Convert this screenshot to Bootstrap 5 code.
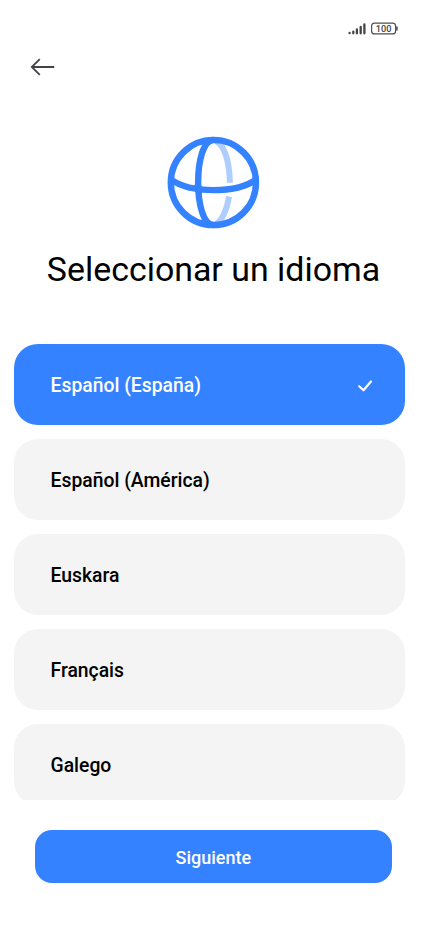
<!DOCTYPE html>
<html lang="es">
<head>
<meta charset="utf-8">
<meta name="viewport" content="width=device-width, initial-scale=1">
<title>Seleccionar un idioma</title>
<link href="https://cdn.jsdelivr.net/npm/bootstrap@5.3.0/dist/css/bootstrap.min.css" rel="stylesheet">
<style>
  body { font-family: Roboto, sans-serif; color: #000; background: #fff; }
  .screen { height: 926px; }
  .status-bar { height: 42px; padding: 20px 28px 0 0; }
  .top-bar { height: 50px; padding: 14px 0 0 29px; }
  .hero-icon { height: 144px; padding-top: 43px; }
  .page-title { font-size: 33.9px; line-height: 42px; font-weight: 400; margin: 13px 0 0; white-space: nowrap; }
  .language-list { margin: 53px 22.3px 0 14px; height: 456px; gap: 13.8px; }
  .language-list .list-group-item { height: 81.1px; padding: 2px 32px 0 36.5px; border: 0; border-radius: 24px; background: #f4f4f4; color: #000; font-size: 19.35px; font-weight: 500; }
  .language-list .list-group-item.active { background: #3482ff; color: #fff; margin-top: 0; }
  .next-area { padding: 30px 35px 0 34.7px; }
  .next-area .btn { height: 53px; border: 0; border-radius: 17px; background: #3482ff; font-size: 18px; font-weight: 500; padding: 2px 0 0; }
</style>
</head>
<body>
<main class="screen d-flex flex-column overflow-hidden">
  <div class="status-bar d-flex justify-content-end align-items-start flex-shrink-0">
    <svg width="51" height="16" viewBox="348 20 51 16" role="img" aria-label="Señal y batería al 100">
      <g stroke="#444" stroke-width="2.3" stroke-linecap="round">
        <path d="M349.6 33v.2M353.3 31.6v1.7M356.9 29.5v3.8M360.7 27v6.3M364.4 24.5v8.8"/>
      </g>
      <rect x="371.6" y="23.1" width="24" height="10.8" rx="3" fill="none" stroke="#505050" stroke-width="1.2"/>
      <path d="M396.9 27v3" stroke="#505050" stroke-width="1.6" stroke-linecap="round"/>
      <text x="383.6" y="31.9" text-anchor="middle" font-family="Roboto, sans-serif" font-size="9.2" font-weight="500" fill="#444">100</text>
    </svg>
  </div>
  <nav class="top-bar d-flex align-items-start flex-shrink-0">
    <a href="#" class="d-flex" aria-label="Volver">
      <svg width="26" height="22" viewBox="29 56 26 22" fill="none" stroke="#434347" stroke-width="1.8"><path d="M54.2 67H31.7M39.8 59.2L31.8 67l8 7.8"/></svg>
    </a>
  </nav>
  <div class="hero-icon d-flex justify-content-center flex-shrink-0">
    <svg width="96" height="96" viewBox="165.5 135 96 96" fill="none" stroke="#3482ff" stroke-width="6.4" aria-hidden="true">
      <g stroke="#afcdff" stroke-width="6">
        <path d="M213 140C223 142 229 160 229.4 182.8"/>
        <path d="M228.5 196.5C227 208 221.5 223 213 225"/>
      </g>
      <circle cx="212.9" cy="182.5" r="42.6"/>
      <path d="M213 140C192.5 140 192.5 225 213 225"/>
      <path d="M170.5 179.5C190 193.6 236 193.6 255.5 179.5"/>
      <path d="M192 187l3.5-3.5v9zM204 189l-3.5-3.5v9z" stroke="none" fill="#3482ff"/>
    </svg>
  </div>
  <h1 class="page-title text-center flex-shrink-0">Seleccionar un idioma</h1>
  <div class="language-list list-group d-flex flex-column overflow-hidden flex-shrink-0 rounded-0">
    <a href="#" class="list-group-item active d-flex align-items-center justify-content-between flex-shrink-0" aria-current="true">
      Español (España)
      <svg width="16" height="14" viewBox="357 378 16 14" fill="none" stroke="#fff" stroke-width="2.2" stroke-linecap="round" stroke-linejoin="round" aria-hidden="true"><path d="M359.2 385.2l4.3 4.1 7.5-8.8"/></svg>
    </a>
    <a href="#" class="list-group-item d-flex align-items-center flex-shrink-0">Español (América)</a>
    <a href="#" class="list-group-item d-flex align-items-center flex-shrink-0">Euskara</a>
    <a href="#" class="list-group-item d-flex align-items-center flex-shrink-0">Français</a>
    <a href="#" class="list-group-item d-flex align-items-center flex-shrink-0">Galego</a>
  </div>
  <div class="next-area d-grid flex-shrink-0">
    <button type="button" class="btn btn-primary">Siguiente</button>
  </div>
</main>
<script src="https://cdn.jsdelivr.net/npm/bootstrap@5.3.0/dist/js/bootstrap.bundle.min.js"></script>
</body>
</html>
